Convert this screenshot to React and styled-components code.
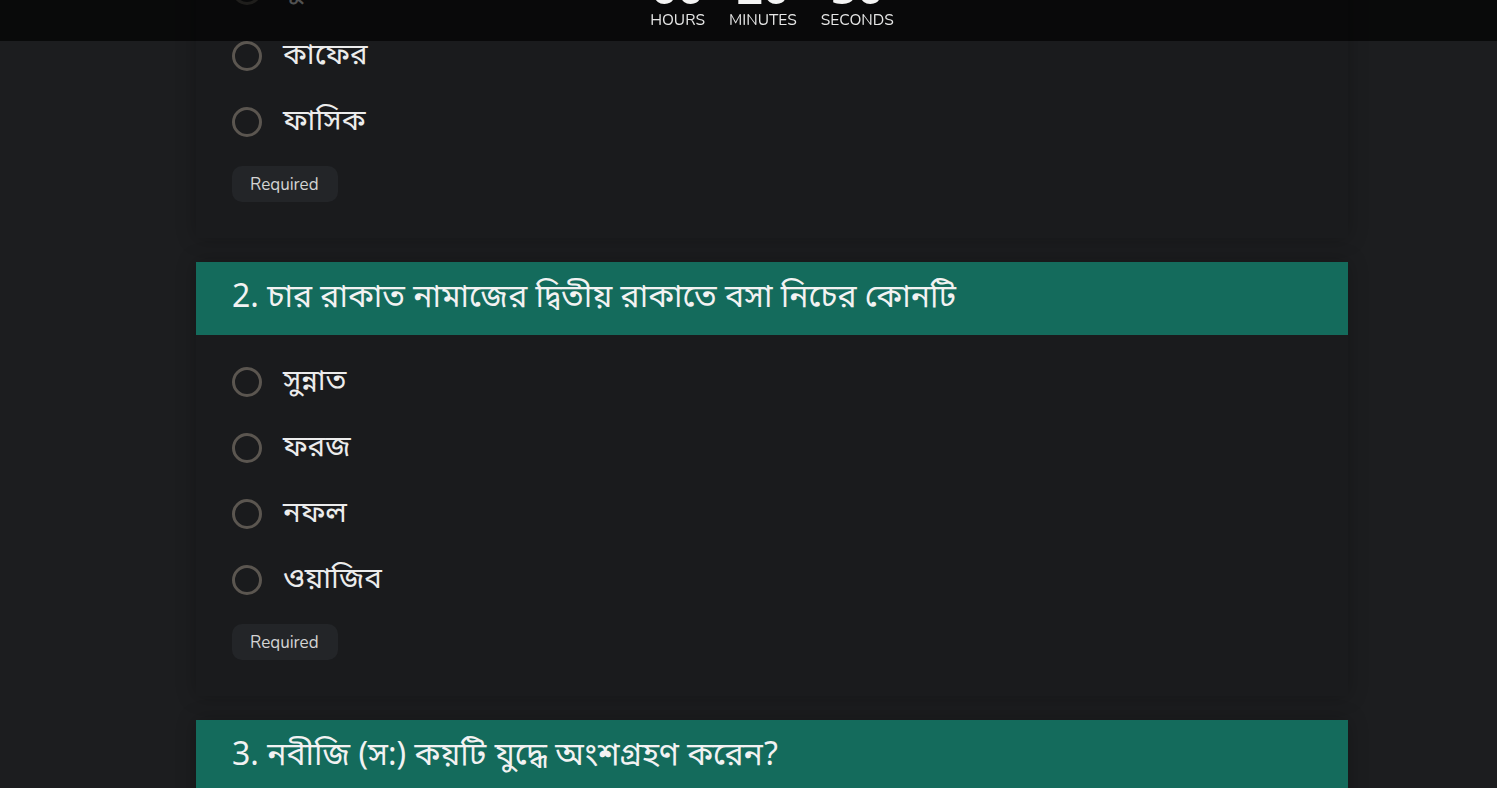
import React from "react";
import styled, { createGlobalStyle } from "styled-components";

const GlobalStyle = createGlobalStyle`
  html, body {
    margin: 0;
    padding: 0;
    background: #1c1d1f;
  }
  * {
    box-sizing: border-box;
  }
`;

const bangla = `"Noto Sans Bengali", "Hind Siliguri", "Noto Sans", sans-serif`;

const Page = styled.div`
  min-height: 100vh;
  padding-left: 47px;
  background: #1c1d1f;
  overflow: hidden;
`;

const TopBar = styled.header`
  position: fixed;
  top: 0;
  left: 0;
  right: 0;
  height: 41px;
  padding: 0 0 12px 47px;
  display: flex;
  justify-content: center;
  align-items: flex-end;
  overflow: hidden;
  background: rgba(0, 0, 0, 0.65);
  z-index: 10;
`;

const Timer = styled.div`
  display: flex;
  align-items: flex-end;
`;

const Unit = styled.div`
  display: flex;
  flex-direction: column;
  align-items: center;
`;

const Number = styled.span`
  font-family: "Noto Sans", sans-serif;
  font-size: 46px;
  line-height: 46px;
  font-weight: 700;
  color: #f4f4f4;
`;

const Label = styled.span`
  margin-top: 2px;
  font-family: "Nunito", "Lato", "Noto Sans", sans-serif;
  font-size: 15.5px;
  line-height: 18px;
  color: #e6e6e6;
`;

const Colon = styled.span`
  align-self: flex-start;
  width: 24px;
  margin-top: -24px;
  text-align: center;
  font-family: "Noto Sans", sans-serif;
  font-size: 46px;
  line-height: 46px;
  font-weight: 700;
  color: #e0362c;
`;

const Main = styled.main`
  width: 1152px;
  margin: -196px auto 0;
  display: flex;
  flex-direction: column;
  gap: 24px;
  padding-bottom: 40px;
`;

const Card = styled.section`
  background: #1a1b1d;
  box-shadow: 0 0 18px rgba(0, 0, 0, 0.25);
`;

const Question = styled.h2`
  margin: 0;
  height: 73px;
  padding: 0 36px;
  display: flex;
  align-items: center;
  background: #146b5c;
  font-family: ${bangla};
  font-size: 32px;
  font-weight: 400;
  color: #f2f2f2;
`;

const Body = styled.div`
  padding: 14px 36px 36px;
`;

const Option = styled.label`
  height: 66px;
  display: flex;
  align-items: center;
  gap: 21px;
  cursor: pointer;
`;

const Radio = styled.span`
  width: 30px;
  height: 30px;
  border-radius: 50%;
  border: 3px solid #5b5650;
  flex-shrink: 0;
`;

const OptionText = styled.span`
  font-family: ${bangla};
  font-size: 29.5px;
  color: #ececec;
`;

const Badge = styled.span`
  display: inline-flex;
  align-items: center;
  height: 36px;
  margin-top: 11px;
  padding: 0 19px 0 18px;
  border-radius: 10px;
  background: #232528;
  font-family: "Nunito", "Lato", "Noto Sans", sans-serif;
  font-size: 17px;
  color: #d4d4d4;
`;

const questions = [
  {
    title: "1. যে ব্যক্তি মুখে ঈমান আনে কিন্তু অন্তরে অবিশ্বাস রাখে তাকে কী বলে",
    options: ["মুমিন", "মুনাফিক", "কাফের", "ফাসিক"],
  },
  {
    title: "2. চার রাকাত নামাজের দ্বিতীয় রাকাতে বসা নিচের কোনটি",
    options: ["সুন্নাত", "ফরজ", "নফল", "ওয়াজিব"],
  },
  {
    title: "3. নবীজি (স:) কয়টি যুদ্ধে অংশগ্রহণ করেন?",
    options: ["২৩ টি", "২৭ টি", "১৯ টি", "২৯ টি"],
  },
];

const App = () => {
  return (
    <Page>
      <GlobalStyle />
      <TopBar>
        <Timer>
          <Unit>
            <Number>00</Number>
            <Label>HOURS</Label>
          </Unit>
          <Colon>:</Colon>
          <Unit>
            <Number>20</Number>
            <Label>MINUTES</Label>
          </Unit>
          <Colon>:</Colon>
          <Unit>
            <Number>50</Number>
            <Label>SECONDS</Label>
          </Unit>
        </Timer>
      </TopBar>
      <Main>
        {questions.map((q) => (
          <Card key={q.title}>
            <Question>{q.title}</Question>
            <Body>
              {q.options.map((o) => (
                <Option key={o}>
                  <Radio />
                  <OptionText>{o}</OptionText>
                </Option>
              ))}
              <Badge>Required</Badge>
            </Body>
          </Card>
        ))}
      </Main>
    </Page>
  );
};

export default App;
